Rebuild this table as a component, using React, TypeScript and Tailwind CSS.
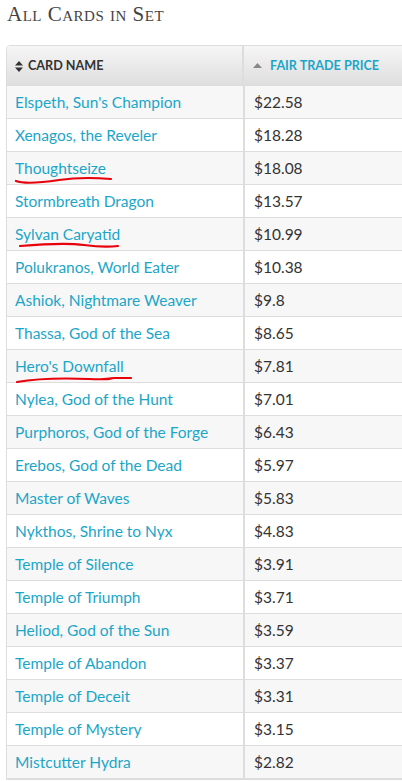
const cards: [string, string][] = [
  ["Elspeth, Sun's Champion", "$22.58"],
  ["Xenagos, the Reveler", "$18.28"],
  ["Thoughtseize", "$18.08"],
  ["Stormbreath Dragon", "$13.57"],
  ["Sylvan Caryatid", "$10.99"],
  ["Polukranos, World Eater", "$10.38"],
  ["Ashiok, Nightmare Weaver", "$9.8"],
  ["Thassa, God of the Sea", "$8.65"],
  ["Hero's Downfall", "$7.81"],
  ["Nylea, God of the Hunt", "$7.01"],
  ["Purphoros, God of the Forge", "$6.43"],
  ["Erebos, God of the Dead", "$5.97"],
  ["Master of Waves", "$5.83"],
  ["Nykthos, Shrine to Nyx", "$4.83"],
  ["Temple of Silence", "$3.91"],
  ["Temple of Triumph", "$3.71"],
  ["Heliod, God of the Sun", "$3.59"],
  ["Temple of Abandon", "$3.37"],
  ["Temple of Deceit", "$3.31"],
  ["Temple of Mystery", "$3.15"],
  ["Mistcutter Hydra", "$2.82"],
];

// red pen marks drawn over some names
const marks: Record<string, { w: number; d: string }> = {
  Thoughtseize: { w: 100, d: "M2 9 C 10 12, 25 11, 45 8 S 85 6, 97 7" },
  "Sylvan Caryatid": { w: 106, d: "M6 8 C 30 6, 55 5, 70 7 S 95 9, 104 8" },
  "Hero's Downfall": { w: 120, d: "M3 12 C 20 9, 50 8, 75 9 S 95 8, 100 8 L 117 8" },
};

const SortBoth = () => (
  <svg width="8" height="11" viewBox="0 0 8 11" className="mr-[5px]">
    <path d="M4 0 L8 4.5 L0 4.5 Z M4 11 L8 6.5 L0 6.5 Z" fill="#333" />
  </svg>
);

const SortUp = () => (
  <svg width="9" height="6" viewBox="0 0 9 6" className="mr-[8px]">
    <path d="M4.5 0 L9 5 L0 5 Z" fill="#888" />
  </svg>
);

export default function App() {
  return (
    <div className="min-h-screen overflow-hidden bg-white font-['Lato',sans-serif]">
      <h2 className="ml-[7px] mt-[2px] h-[43px] font-['Liberation_Serif',serif] text-[21px] leading-[24px] tracking-[0.5px] text-[#444] [font-variant:small-caps]">
        All Cards in Set
      </h2>
      <div className="ml-[6px] w-[420px] overflow-hidden rounded-tl-[4px] border border-[#ddd]">
        <div className="flex h-[40px] border-b border-[#ddd] bg-gradient-to-b from-[#f6f6f6] to-[#dedede] text-[12.6px] font-bold">
          <div className="flex w-[237px] items-center border-r-2 border-[#ddd] pl-[8px] pt-[1px] text-[#333]">
            <SortBoth />
            CARD NAME
          </div>
          <div className="flex flex-1 items-center pl-[9px] pt-[1px] text-[#1ba6c8]">
            <SortUp />
            FAIR TRADE PRICE
          </div>
        </div>
        {cards.map(([name, price], i) => {
          const m = marks[name];
          return (
            <div
              key={name}
              className={`flex h-[33px] border-b border-[#ddd] text-[15.5px] ${
                i % 2 === 0 ? "bg-[#f7f7f7]" : "bg-white"
              }`}
            >
              <div className="relative flex w-[238px] items-center border-r-2 border-[#ddd] pl-[8px] pt-[2px] text-[#1ba6c8]">
                {name}
                {m && (
                  <svg
                    width={m.w}
                    height="14"
                    viewBox={`0 0 ${m.w} 14`}
                    className="absolute left-[7px] top-[20px]"
                  >
                    <path d={m.d} fill="none" stroke="#e8000b" strokeWidth="2.2" strokeLinecap="round" />
                  </svg>
                )}
              </div>
              <div className="flex flex-1 items-center pl-[9px] pt-[2px] text-[#333]">{price}</div>
            </div>
          );
        })}
      </div>
    </div>
  );
}
